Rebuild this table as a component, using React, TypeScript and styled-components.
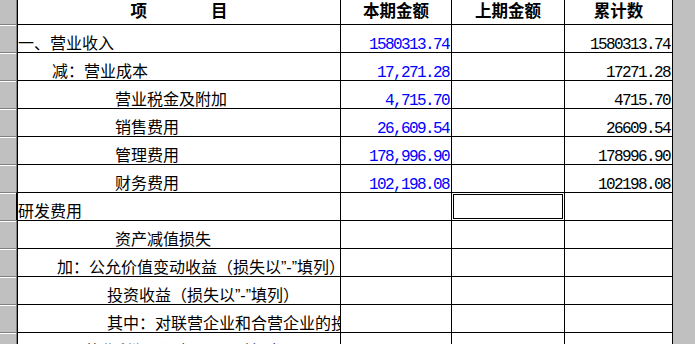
import React from 'react'
import styled, { createGlobalStyle } from 'styled-components'

const GlobalStyle = createGlobalStyle`
  html, body {
    margin: 0;
    padding: 0;
    background: #fff;
    overflow: hidden;
  }
  body {
    font-family: "Noto Sans CJK SC", "Liberation Sans", sans-serif;
  }
`

type Row = {
  label: string
  indent: number
  current?: string
  total?: string
}

const rows: Row[] = [
  { label: '一、营业收入', indent: 0, current: '1580313.74', total: '1580313.74' },
  { label: '减：营业成本', indent: 34, current: '17,271.28', total: '17271.28' },
  { label: '营业税金及附加', indent: 97, current: '4,715.70', total: '4715.70' },
  { label: '销售费用', indent: 97, current: '26,609.54', total: '26609.54' },
  { label: '管理费用', indent: 97, current: '178,996.90', total: '178996.90' },
  { label: '财务费用', indent: 97, current: '102,198.08', total: '102198.08' },
  { label: '研发费用', indent: 0 },
  { label: '资产减值损失', indent: 97 },
  { label: '加：公允价值变动收益（损失以”-”填列）', indent: 39 },
  { label: '投资收益（损失以”-”填列）', indent: 89 },
  { label: '其中：对联营企业和合营企业的投资收益', indent: 89 },
  { label: '二、营业利润（亏损以”-”号填列）', indent: 34 },
]

// row 7 (研发费用) holds the active cell in 上期金额
const ACTIVE_ROW = 6

const App: React.FC = () => {
  return (
    <Screen>
      <GlobalStyle />
      <RowHeaders>
        <RowHead first />
        {rows.map((r, i) => (
          <RowHead key={i} active={i === ACTIVE_ROW} />
        ))}
      </RowHeaders>
      <Sheet>
        <HeadCell>
          <span>项</span>
          <span>目</span>
        </HeadCell>
        <HeadCell>本期金额</HeadCell>
        <HeadCell>上期金额</HeadCell>
        <HeadCell>累计数</HeadCell>
        {rows.map((r, i) => (
          <React.Fragment key={i}>
            <LabelCell indent={r.indent}>{r.label}</LabelCell>
            <NumCell blue>{r.current}</NumCell>
            <NumCell selected={i === ACTIVE_ROW}></NumCell>
            <NumCell>{r.total}</NumCell>
          </React.Fragment>
        ))}
      </Sheet>
      <Gutter />
    </Screen>
  )
}

const Screen = styled.div`
  display: flex;
  width: 695px;
  height: 344px;
  overflow: hidden;
`

const RowHeaders = styled.div`
  flex: none;
  width: 17px;
  display: flex;
  flex-direction: column;
  background: #c0c0c0;
`

const RowHead = styled.div<{ first?: boolean; active?: boolean }>`
  flex: none;
  box-sizing: border-box;
  height: ${(p) => (p.first ? 24 : 28)}px;
  border-right: 1px solid ${(p) => (p.active ? '#000' : '#808080')};
  border-top: ${(p) => (p.first ? 'none' : '1px solid #808080')};
  box-shadow: ${(p) => (p.first ? 'none' : 'inset 0 1px 0 #fff')};
  background: #c0c0c0;
`

const Sheet = styled.div`
  flex: none;
  display: grid;
  grid-template-columns: 322px 110px 112px 107px;
  grid-template-rows: 24px;
  grid-auto-rows: 27px;
  gap: 1px;
  background: #000;
  border-left: 1px solid #000;
  border-right: 1px solid #000;
  align-self: flex-start;
`

const HeadCell = styled.div`
  background: #fff;
  display: flex;
  align-items: center;
  justify-content: center;
  gap: 64px;
  padding-bottom: 3px;
  box-sizing: border-box;
  font-size: 16.5px;
  font-weight: 700;
  line-height: 1;
  color: #000;
`

// Latin first so the quote marks stay narrow, CJK falls through to Noto
const LabelCell = styled.div<{ indent: number }>`
  background: #fff;
  display: flex;
  align-items: flex-end;
  box-sizing: border-box;
  padding-left: ${(p) => p.indent}px;
  padding-bottom: 0;
  font-family: "Liberation Sans", "Noto Sans CJK SC", sans-serif;
  font-size: 16px;
  line-height: 1;
  color: #000;
  white-space: nowrap;
  overflow: hidden;
`

const NumCell = styled.div<{ blue?: boolean; selected?: boolean }>`
  background: #fff;
  display: flex;
  align-items: flex-end;
  justify-content: flex-end;
  box-sizing: border-box;
  padding-right: 2px;
  font-family: "Liberation Mono", "DejaVu Sans Mono", monospace;
  font-size: 16px;
  letter-spacing: -1.6px;
  line-height: 14px;
  color: ${(p) => (p.blue ? '#0000ff' : '#000')};
  white-space: nowrap;
  overflow: hidden;
  box-shadow: ${(p) =>
    p.selected ? 'inset 0 0 0 1px #fff, inset 0 0 0 2px #000' : 'none'};
`

const Gutter = styled.div`
  flex: 1;
  background: #c0c0c0;
`

export default App
